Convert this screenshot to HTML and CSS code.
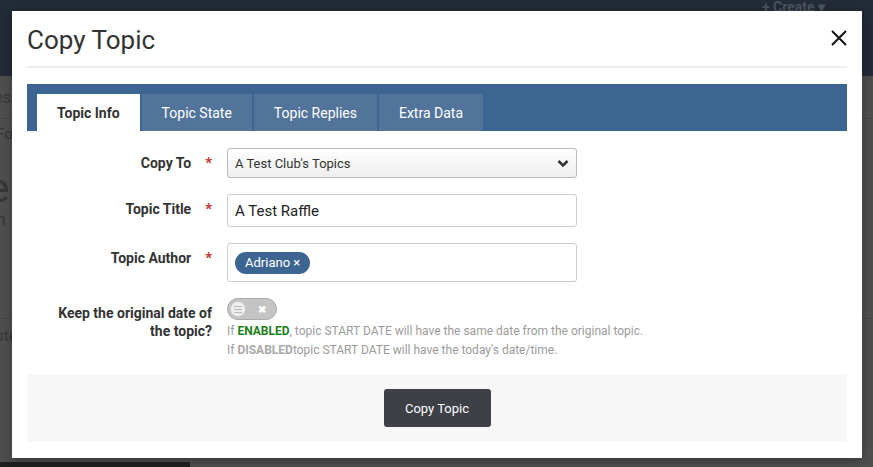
FILE: index.html
```html
<!DOCTYPE html>
<html lang="en">
<head>
  <meta charset="UTF-8" />
  <title>Copy Topic</title>
  <link rel="stylesheet" href="styles.css">
</head>
<body>
  <div class="page">
    <div class="topbar">
      <span class="create">+ Create ▾</span>
    </div>
    <div class="page-body">
      <div class="crumb">es</div>
      <div class="sub">Fo</div>
      <div class="big">e</div>
      <div class="small">n</div>
      <div class="sub low">ste</div>
    </div>
    <div class="bottom-bar"></div>
  </div>

  <div class="modal">
    <div class="modal-header">
      <h2>Copy Topic</h2>
      <button class="close" aria-label="Close">
        <svg width="16" height="16" viewBox="0 0 16 16"><path d="M1 1 L15 15 M15 1 L1 15" stroke="#111" stroke-width="2" fill="none"/></svg>
      </button>
    </div>

    <div class="tabs">
      <a class="tab active">Topic Info</a>
      <a class="tab">Topic State</a>
      <a class="tab">Topic Replies</a>
      <a class="tab">Extra Data</a>
    </div>

    <div class="tab-body">
      <div class="row">
        <label class="req">Copy To</label>
        <div class="field">
          <div class="select">
            <span>A Test Club's Topics</span>
            <svg width="12" height="9" viewBox="0 0 12 9"><path d="M1.5 2 L6 6.5 L10.5 2" stroke="#333" stroke-width="2.6" fill="none"/></svg>
          </div>
        </div>
      </div>
      <div class="row">
        <label class="req">Topic Title</label>
        <div class="field">
          <div class="input">A Test Raffle</div>
        </div>
      </div>
      <div class="row">
        <label class="req">Topic Author</label>
        <div class="field">
          <div class="input tags"><span class="tag">Adriano ×</span></div>
        </div>
      </div>
      <div class="row">
        <label>Keep the original date of the topic?</label>
        <div class="field">
          <div class="toggle">
            <span class="knob"></span>
            <span class="off">✖</span>
          </div>
          <p class="help">If <b class="on-word">ENABLED</b>, topic START DATE will have the same date from the original topic.<br>If <b class="off-word">DISABLED</b>topic START DATE will have the today's date/time.</p>
        </div>
      </div>
    </div>

    <div class="modal-footer">
      <button class="btn">Copy Topic</button>
    </div>
  </div>
</body>
</html>
```

FILE: styles.css
```css
body {
  margin: 0;
  font-family: Roboto, 'Noto Sans', sans-serif;
  background: #4e4e4e;
  color: #333;
  overflow: hidden;
}
.page {
  height: 467px;
  position: relative;
}
.topbar {
  height: 76px;
  background: #232b37;
  display: flex;
  justify-content: flex-end;
}
.create {
  color: #4a525d;
  font-weight: bold;
  font-size: 14px;
  margin: -1px 48px 0 0;
}
.page-body {
  color: #363636;
}
.crumb {
  font-size: 16px;
  padding: 12px 0 11px;
  margin-left: -6px;
  border-bottom: 1px solid #444;
}
.sub {
  font-size: 15px;
  margin-left: -4px;
  padding-top: 6px;
}
.big {
  font-size: 40px;
  margin: 26px 0 0 -12px;
  line-height: 40px;
}
.small {
  font-size: 18px;
  margin-left: -4px;
}
.sub.low {
  margin-top: 88px;
  padding-top: 8px;
  border-top: 1px solid #444;
}
.bottom-bar {
  position: absolute;
  left: 0;
  bottom: 0;
  width: 190px;
  height: 5px;
  background: #202020;
}

.modal {
  position: absolute;
  left: 12px;
  top: 11px;
  width: 820px;
  padding: 0 15px 16px;
  background: #fff;
  box-shadow: 0 3px 9px rgba(0,0,0,0.3);
}
.modal-header {
  display: flex;
  justify-content: space-between;
  align-items: center;
  height: 55px;
  border-bottom: 2px solid #eee;
  margin-bottom: 16px;
}
.modal-header h2 {
  margin: 0;
  font-size: 26px;
  font-weight: 400;
  color: #333;
  padding-top: 2px;
}
.close {
  border: 0;
  background: none;
  padding: 0;
  margin-top: -2px;
  display: flex;
}
.tabs {
  background: #3d6591;
  padding: 10px 10px 0;
  display: flex;
  gap: 2px;
}
.tab {
  background: #52749b;
  color: #fff;
  font-size: 14px;
  padding: 0 20px;
  height: 37px;
  line-height: 38px;
}
.tab.active {
  background: #fff;
  color: #333;
  font-weight: bold;
}

.tab-body {
  padding: 17px 0 14px;
}
.row {
  display: flex;
  gap: 15px;
  margin-bottom: 16px;
}
.row:last-child {
  margin-bottom: 0;
}
.row label {
  width: 170px;
  padding-left: 15px;
  text-align: right;
  font-size: 14px;
  font-weight: bold;
  line-height: 18px;
  padding-top: 6px;
  color: #333;
}
.row label.req::after {
  content: "*";
  color: #c9302c;
  margin-left: 14px;
  font-size: 15px;
}
.field {
  width: 350px;
}
.select {
  height: 28px;
  border: 1px solid #bbb;
  border-radius: 3px;
  background: linear-gradient(#fff, #eee);
  display: flex;
  align-items: center;
  justify-content: space-between;
  padding: 0 7px;
  font-size: 13px;
  color: #333;
}
.input {
  height: 31px;
  border: 1px solid #ccc;
  border-radius: 3px;
  padding: 0 7px;
  display: flex;
  align-items: center;
  font-size: 15px;
  color: #222;
}
.input.tags {
  height: 37px;
  align-items: flex-start;
}
.tag {
  margin-top: 8px;
  background: #3d6591;
  color: #fff;
  font-size: 13px;
  height: 22px;
  line-height: 22px;
  padding: 0 10px;
  border-radius: 11px;
}
.toggle {
  width: 50px;
  height: 22px;
  border: 1px solid #aaa;
  border-radius: 11px;
  background: #c4c4c4;
  display: flex;
  align-items: center;
  justify-content: space-between;
  padding: 0 10px 0 2px;
  box-sizing: border-box;
}
.knob {
  width: 16px;
  height: 16px;
  border-radius: 50%;
  background: #eee;
  border: 1px solid #ccc;
  box-sizing: border-box;
  background-image: linear-gradient(#bbb, #bbb), linear-gradient(#bbb, #bbb), linear-gradient(#bbb, #bbb);
  background-size: 8px 1px;
  background-repeat: no-repeat;
  background-position: 3px 4px, 3px 7px, 3px 10px;
}
.off {
  color: #fff;
  font-size: 10px;
  font-weight: bold;
}
.help {
  margin: 2px 0 0;
  font-size: 12px;
  line-height: 19px;
  color: #9b9b9b;
  white-space: nowrap;
}
.on-word {
  color: #1a7f1a;
}
.off-word {
  color: #a9a9a9;
}

.modal-footer {
  background: #f7f7f7;
  height: 68px;
  display: flex;
  justify-content: center;
  align-items: center;
}
.btn {
  background: #3d4047;
  color: #fff;
  border: 0;
  border-radius: 3px;
  font-family: Roboto, sans-serif;
  font-size: 13px;
  width: 107px;
  height: 38px;
}
```
